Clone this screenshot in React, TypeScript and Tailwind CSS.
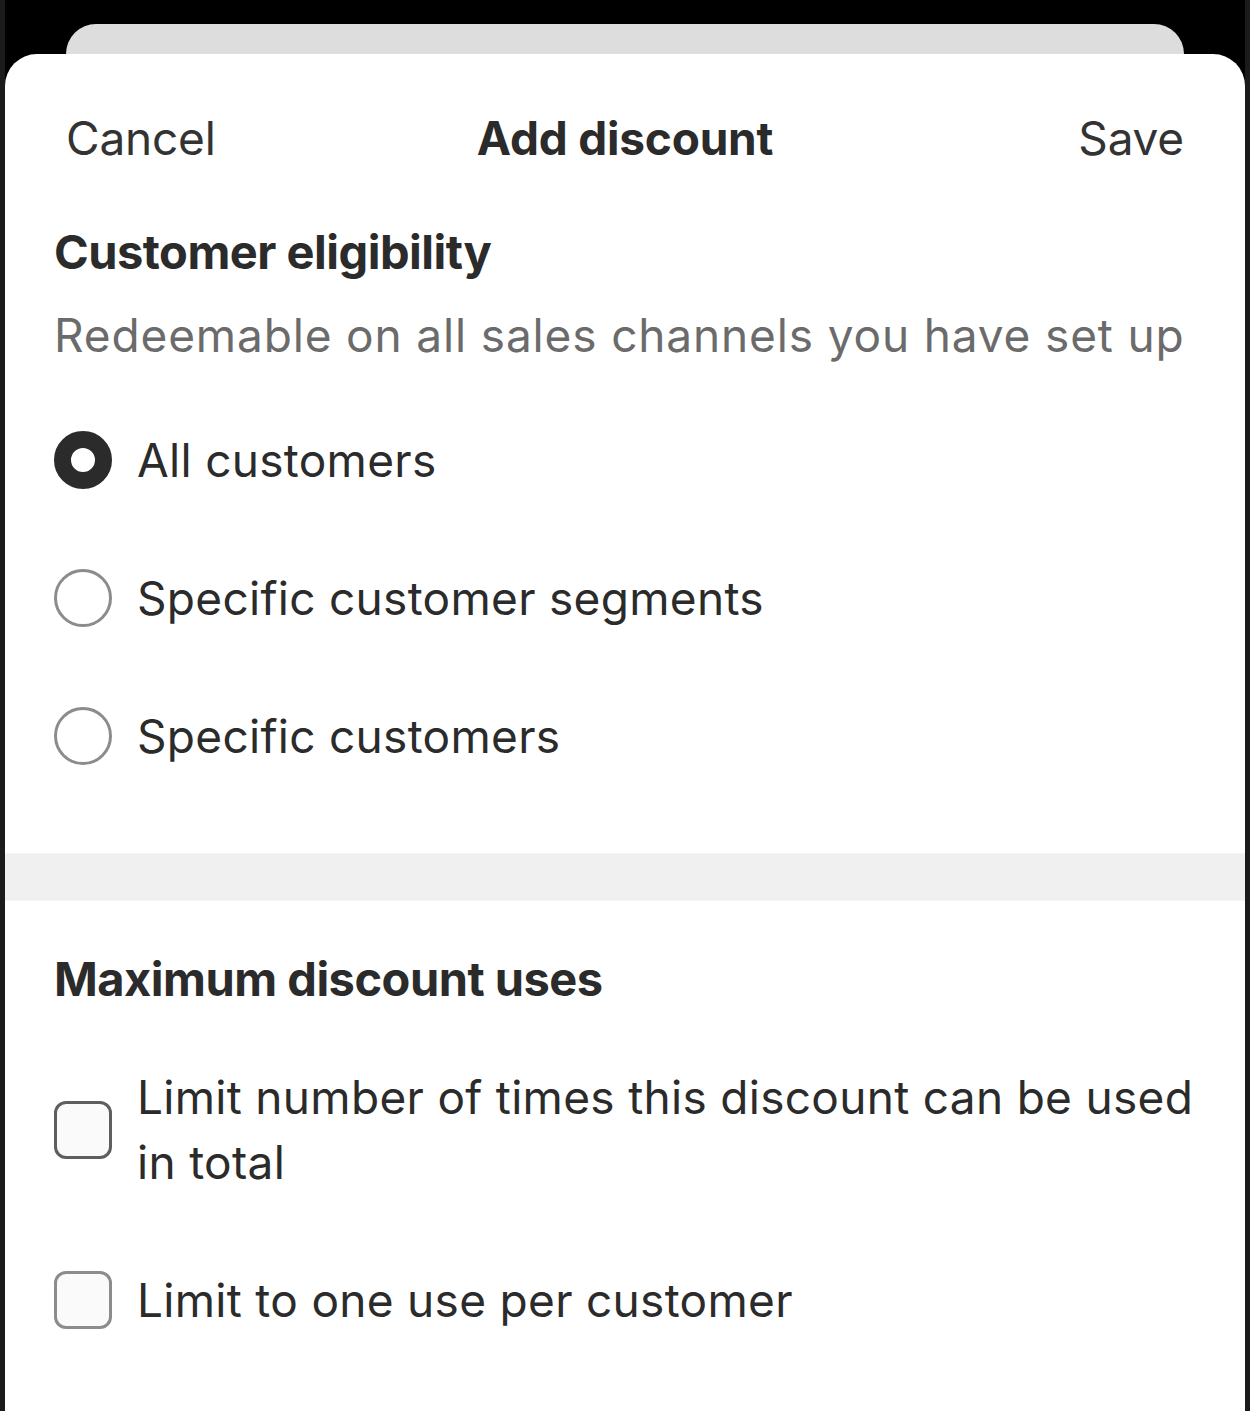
import React from "react";

function Radio({ checked }: { checked?: boolean }) {
  return checked ? (
    <span className="box-border block h-[58px] w-[58px] shrink-0 rounded-full border-[17px] border-[#2b2b2b] bg-white" />
  ) : (
    <span className="box-border block h-[58px] w-[58px] shrink-0 rounded-full border-[3px] border-[#8c8c8c] bg-white" />
  );
}

function Checkbox({ dark }: { dark?: boolean }) {
  return (
    <span
      className={
        "box-border block h-[58px] w-[58px] shrink-0 rounded-[12px] border-[3px] bg-[#fafafa] " +
        (dark ? "border-[#5e5e5e]" : "border-[#8c8c8c]")
      }
    />
  );
}

const options = ["All customers", "Specific customer segments", "Specific customers"];

export default function App() {
  return (
    <div
      className="box-border flex h-[1411px] w-[1250px] flex-col overflow-hidden border-x-[5px] border-[#1b1b1b] bg-black text-[#2b2b2b]"
      style={{ fontFamily: "Inter, 'Noto Sans', sans-serif" }}
    >
      {/* stacked sheet behind */}
      <div className="mx-[61px] mt-[24px] h-[30px] shrink-0 rounded-t-[30px] bg-[#dddddd]" />

      <div className="flex flex-1 flex-col rounded-t-[32px] bg-white">
        <header className="grid h-[170px] grid-cols-[1fr_auto_1fr] items-center px-[61px] pb-[2px] text-[46px] tracking-[-0.2px]">
          <span className="text-[#333]">Cancel</span>
          <span className="font-bold text-[#2b2b2b]">Add discount</span>
          <span className="text-right text-[#333]">Save</span>
        </header>

        <section className="px-[49px]">
          <h2 className="text-[47px] font-bold leading-[56px] tracking-[-0.5px] text-[#2b2b2b]">
            Customer eligibility
          </h2>
          <p className="mt-[27px] text-[46px] leading-[56px] tracking-[0.85px] text-[#6b6b6b]">
            Redeemable on all sales channels you have set up
          </p>

          <div className="mt-[68px] flex flex-col gap-[80px]">
            {options.map((o, i) => (
              <label key={o} className="flex h-[58px] items-center gap-[25px]">
                <Radio checked={i === 0} />
                <span className="text-[46px] leading-[56px] tracking-[0.3px] text-[#2b2b2b]">{o}</span>
              </label>
            ))}
          </div>
        </section>

        <div className="mt-[88px] h-[48px] border-y border-[#f5f5f5] bg-[#f0f0f0]" />

        <section className="px-[49px]">
          <h2 className="mt-[50px] text-[47px] font-bold leading-[56px] tracking-[-0.5px] text-[#2b2b2b]">
            Maximum discount uses
          </h2>

          <label className="mt-[58px] flex items-center gap-[25px]">
            <Checkbox dark />
            <span className="text-[46px] leading-[65px] tracking-[0.3px] text-[#2b2b2b]">
              Limit number of times this discount can be used in total
            </span>
          </label>

          <label className="mt-[76px] flex items-center gap-[25px]">
            <Checkbox />
            <span className="text-[46px] leading-[56px] tracking-[0.3px] text-[#2b2b2b]">
              Limit to one use per customer
            </span>
          </label>
        </section>
      </div>
    </div>
  );
}
